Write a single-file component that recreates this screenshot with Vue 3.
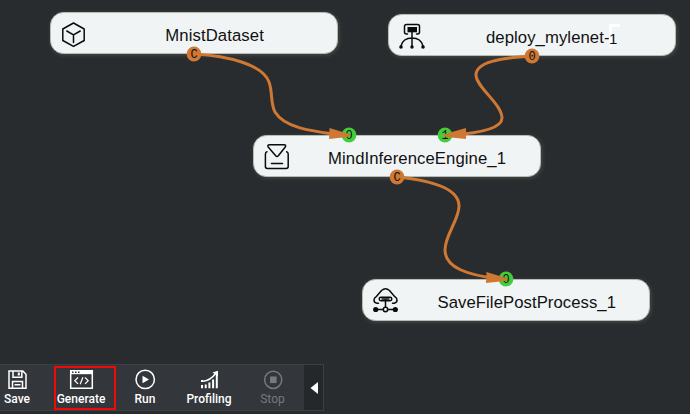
<script setup>
const nodes = [
  { id: 'dataset', x: 50, y: 12, label: 'MnistDataset', icon: 'cube', tx: 165.3, w: 98.5 },
  { id: 'model', x: 388, y: 14, label: 'deploy_mylenet-', icon: 'model', tx: 486, w: 123.5 },
  { id: 'engine', x: 253, y: 135, label: 'MindInferenceEngine_1', icon: 'engine', tx: 328, w: 178 },
  { id: 'save', x: 362, y: 279, label: 'SaveFilePostProcess_1', icon: 'cloud', tx: 437.5, w: 178.5 },
]
const ports = [
  { x: 194, y: 54, label: 'C', kind: 'out' },
  { x: 532, y: 56, label: '0', kind: 'out' },
  { x: 397, y: 177, label: 'C', kind: 'out' },
  { x: 349, y: 135, label: '0', kind: 'in' },
  { x: 445, y: 135, label: '1', kind: 'in' },
  { x: 506, y: 279, label: '0', kind: 'in' },
]
const edges = [
  { d: 'M194 54C228 56 262 64 269 82C273 93 270 102 275 112C284 127 308 131 342 135', arrow: '329.5,128 350,134.3 350,136.7 329,139' },
  { d: 'M532 56C500 58 476 62 476 75C476 87 502 104 502 118C502 128 480 133 452 135', arrow: '466,128 444,134.3 444,136.7 466,139' },
  { d: 'M397 177C438 181 459 191 459 206C459 220 445 235 445 250C445 268 468 275 499 279', arrow: '486.5,272 507,278.3 507,280.7 486,283' },
]
const actions = [
  { id: 'save', label: 'Save' },
  { id: 'generate', label: 'Generate', marked: true },
  { id: 'run', label: 'Run' },
  { id: 'profiling', label: 'Profiling' },
  { id: 'stop', label: 'Stop', disabled: true },
]
</script>

<template>
  <main class="editor">
    <svg class="canvas" width="690" height="364" viewBox="0 0 690 364">
      <g v-for="n in nodes" :key="n.id">
        <rect class="node" :x="n.x + 0.5" :y="n.y + 0.5" width="287" height="41" rx="13" />
        <g class="glyph" :transform="`translate(${n.x} ${n.y})`">
          <g v-if="n.icon === 'cube'">
            <path d="M23.5 11L34.2 17V28.5L23.5 34.4L12.8 28.5V17ZM16.8 19L23.5 22.8L30.2 19M23.5 22.8V30.5" />
          </g>
          <g v-else-if="n.icon === 'model'">
            <path d="M19.5 20H18.5Q16.5 20 16.5 18V12.5Q16.5 10.5 18.5 10.5H29.5Q31.5 10.5 31.5 12.5V18Q31.5 20 29.5 20H28.5M24 18V32M13 32Q15 24 24 24Q33 24 35 32" />
            <rect class="solid" x="19.5" y="13" width="9.5" height="5.3" />
            <circle class="solid" cx="13" cy="33" r="1.8" />
            <circle class="solid" cx="24" cy="33" r="1.7" />
            <circle class="solid" cx="35" cy="33" r="1.8" />
          </g>
          <g v-else-if="n.icon === 'engine'">
            <path d="M16.5 9.8H31Q33.5 9.8 32.3 12L25.3 20.8Q24 22.2 22.7 20.8L15.2 12Q14 9.8 16.5 9.8ZM14 16.8Q12.4 17 12.4 19.2V31.6Q12.4 33.5 14.3 33.5H33.2Q35.2 33.5 35.2 31.6V19.2Q35.2 17 33.6 16.8M18.5 28.5H29.5" />
          </g>
          <g v-else>
            <path d="M16.5 24.2H15Q12 24 12 21Q12 18.9 14.2 17.7L19.5 11.5Q23.5 8 27.5 11.5L32.8 17.7Q35 18.9 35 21Q35 24 32 24.2H30.5" />
            <rect x="17.2" y="18.3" width="12.6" height="3.4" rx="1.7" />
            <path d="M20 20H27M23.5 21V28M14 30.5H21M26 30.5H33" />
            <circle class="solid" cx="13.7" cy="30.5" r="2.6" />
            <circle cx="23.5" cy="30.5" r="2.2" />
            <circle class="solid" cx="33.3" cy="30.5" r="2.6" />
          </g>
        </g>
        <text class="title" :x="n.tx" :y="n.y + 29" :textLength="n.w">{{ n.label }}</text>
      </g>
      <path class="patch" d="M609 24H620V27H612V47H609Z" />
      <text class="suffix" x="609" y="43.5">1</text>

      <g v-for="(p, i) in ports" :key="'p' + i">
        <template v-if="p.kind === 'in'">
          <circle class="port in" :cx="p.x" :cy="p.y" r="7.4" />
          <text class="port-label" :x="p.x" :y="p.y + 4.2">{{ p.label }}</text>
        </template>
      </g>
      <g v-for="(e, i) in edges" :key="'e' + i">
        <path class="edge" :d="e.d" />
        <polygon class="arrow" :points="e.arrow" />
      </g>
      <g v-for="(p, i) in ports" :key="'o' + i">
        <template v-if="p.kind === 'out'">
          <circle class="port out" :cx="p.x" :cy="p.y" r="7.4" />
          <text class="port-label" :x="p.x" :y="p.y + 4.2">{{ p.label }}</text>
        </template>
      </g>
    </svg>

    <footer class="toolbar">
      <button v-for="a in actions" :key="a.id" :class="['action', a.id, { marked: a.marked, disabled: a.disabled }]">
        <svg class="icon" width="26" height="22" viewBox="0 0 26 22">
          <g v-if="a.id === 'save'">
            <path d="M5 2H18.8L22 5.2V19.3H5ZM9 2.3V8.3H17.8V2.3M8.5 19V12.5H18.5V19M10.5 15.8H16.5" />
            <path class="fill" d="M13.8 3.5H15.8V6.5H13.8Z" />
          </g>
          <g v-else-if="a.id === 'generate'">
            <path d="M2.7 1.8H24.3V19.2H2.7Z" />
            <path class="fill" d="M2 1H25V5.2H2Z" />
            <path class="dots" d="M4 2.5H5.5V4H4ZM7 2.5H8.5V4H7ZM10 2.5H11.5V4H10Z" />
            <path class="thin" d="M10 8.5L6.8 11.7L10 14.9M17 8.5L20.2 11.7L17 14.9M14.9 8.2L12.2 15.2" />
          </g>
          <g v-else-if="a.id === 'run'">
            <circle cx="13.2" cy="10.4" r="9.2" />
            <path class="fill" d="M10.5 6.8L17 10.5L10.5 14.2Z" />
          </g>
          <g v-else-if="a.id === 'profiling'">
            <path class="bars" d="M6 11V13M6 16V19.3M9.7 15.5V19.3M13.4 13.5V19.3M17.1 10.5V19.3M20.8 6V19.3" />
            <path d="M7 12.2C12 11.8 16 9.5 20 4" />
            <path class="fill" d="M16.5 3.4L22 1.8V7.2Z" />
          </g>
          <g v-else>
            <circle cx="13.2" cy="10.8" r="8.6" />
            <rect class="fill" x="10" y="7.5" width="6.6" height="6.6" />
          </g>
        </svg>
        <span>{{ a.label }}</span>
      </button>
      <button class="collapse" aria-label="Collapse">
        <svg width="8" height="12" viewBox="0 0 8 12"><path d="M8 0V12L0.5 6Z" fill="#fff" /></svg>
      </button>
    </footer>
  </main>
</template>

<style>
body {
  background: #292c2f;
  overflow: hidden;
}
</style>

<style scoped>
.editor {
  display: flex;
  flex-direction: column;
  width: 690px;
  height: 414px;
  background: #292c2f;
}
.canvas {
  display: block;
  flex: none;
}
.node {
  fill: #f0f4f5;
  stroke: #b9bbb2;
  stroke-width: 1;
  filter: drop-shadow(1px 1px 2px rgba(150, 150, 140, 0.3));
}
.glyph {
  fill: none;
  stroke: #0b0b0b;
  stroke-width: 1.5;
  stroke-linejoin: round;
  stroke-linecap: round;
}
.glyph .solid {
  fill: #0b0b0b;
  stroke: none;
}
.title,
.suffix {
  font-family: 'Liberation Sans', Arial, sans-serif;
  font-size: 16.7px;
  fill: #111;
}
.suffix {
  font-size: 15px;
}
.patch {
  fill: #fff;
}
.port.in {
  fill: #43cd38;
}
.port.out {
  fill: #ce7833;
}
.port-label {
  font-family: 'Liberation Mono', monospace;
  font-size: 12px;
  text-anchor: middle;
  fill: #101010;
}
.edge {
  fill: none;
  stroke: #ce7833;
  stroke-width: 3;
}
.arrow {
  fill: #ce7833;
}
.toolbar {
  display: flex;
  box-sizing: border-box;
  width: 324px;
  height: 47px;
  border: 1px solid #3d4043;
  border-left: 0;
  background: #33363b;
}
button {
  padding: 0;
  border: 0;
  background: none;
  color: #fff;
  font: 500 12px/14px Roboto, sans-serif;
}
.action {
  display: flex;
  flex: none;
  flex-direction: column;
  align-items: center;
  box-sizing: border-box;
  width: 64px;
  padding-top: 4px;
}
.action.save {
  width: 50px;
  margin-right: 4px;
  padding-right: 16px;
}
.action.marked {
  width: 62px;
  height: 44px;
  margin: 1px 0 0;
  padding: 1px 8px 0 0;
  border: 2px solid #f30808;
}
.action.run {
  width: 58px;
  margin-right: 3px;
}
.action.stop {
  width: 63px;
}
.icon {
  display: block;
  flex: none;
  fill: none;
  stroke: currentColor;
  stroke-width: 1.5;
}
.icon .fill {
  fill: currentColor;
  stroke: none;
}
.icon .dots {
  fill: #33363b;
  stroke: none;
}
.icon .thin {
  stroke-width: 1.2;
}
.icon .bars {
  stroke-width: 2;
}
.action span {
  margin-top: 1px;
}
.action.disabled {
  color: #77797c;
  font-weight: 400;
}
.collapse {
  display: flex;
  align-items: center;
  justify-content: center;
  width: 19px;
  margin-left: auto;
  background: #25282b;
}
</style>
